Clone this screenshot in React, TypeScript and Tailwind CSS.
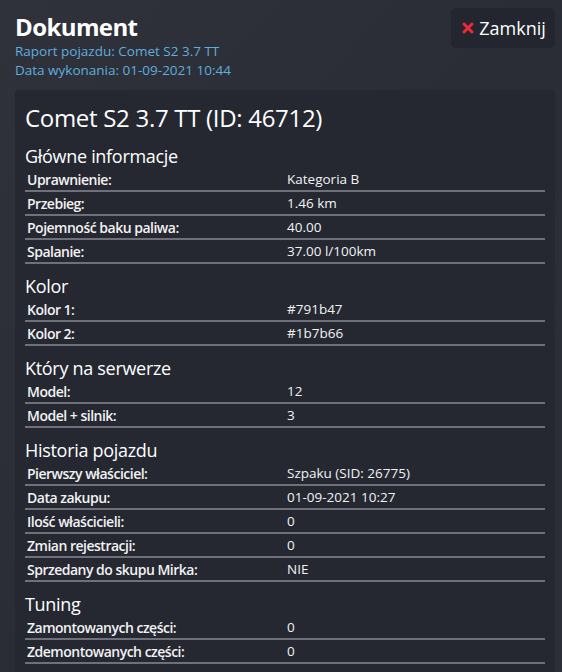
import { X } from 'lucide-react';

type Row = [string, string];

const sections: { title: string; rows: Row[] }[] = [
  {
    title: 'Główne informacje',
    rows: [
      ['Uprawnienie:', 'Kategoria B'],
      ['Przebieg:', '1.46 km'],
      ['Pojemność baku paliwa:', '40.00'],
      ['Spalanie:', '37.00 l/100km'],
    ],
  },
  {
    title: 'Kolor',
    rows: [
      ['Kolor 1:', '#791b47'],
      ['Kolor 2:', '#1b7b66'],
    ],
  },
  {
    title: 'Który na serwerze',
    rows: [
      ['Model:', '12'],
      ['Model + silnik:', '3'],
    ],
  },
  {
    title: 'Historia pojazdu',
    rows: [
      ['Pierwszy właściciel:', 'Szpaku (SID: 26775)'],
      ['Data zakupu:', '01-09-2021 10:27'],
      ['Ilość właścicieli:', '0'],
      ['Zmian rejestracji:', '0'],
      ['Sprzedany do skupu Mirka:', 'NIE'],
    ],
  },
  {
    title: 'Tuning',
    rows: [
      ['Zamontowanych części:', '0'],
      ['Zdemontowanych części:', '0'],
    ],
  },
];

export default function App() {
  return (
    <div className="w-[562px] h-[672px] overflow-hidden bg-[#2b2e37] bg-gradient-to-br from-[#2f323b] via-[#2a2d36] to-[#2c2f38] text-[#f2f2f2] font-['Open_Sans',sans-serif]">
      <div className="flex items-start justify-between pl-[15px] pr-[7px] pt-[8px]">
        <div className="pt-[4px]">
          <h1 className="text-[24px] font-bold leading-[30px] tracking-[-0.6px] text-white">Dokument</h1>
          <p className="text-[13.5px] leading-[19px] text-[#5eaede]">Raport pojazdu: Comet S2 3.7 TT</p>
          <p className="text-[13.5px] leading-[19px] text-[#5eaede]">Data wykonania: 01-09-2021 10:44</p>
        </div>
        <button className="flex h-[40px] w-[104px] items-center justify-center gap-[3px] rounded-[5px] bg-[#23262e] text-[18px] text-white">
          <X className="h-[16px] w-[16px] text-[#f0283a]" strokeWidth={4.5} />
          <span>Zamknij</span>
        </button>
      </div>

      <div className="ml-[15px] mr-[7px] mt-[10px] h-[600px] rounded-t-[3px] bg-[#252831] px-[10px] pt-[12px]">
        <h2 className="mb-[10px] text-[24px] leading-[32px] tracking-[-0.3px] text-white">Comet S2 3.7 TT (ID: 46712)</h2>
        {sections.map((s, i) => (
          <div key={s.title} className={i > 0 ? 'mt-[10px]' : ''}>
            <h3 className="text-[18px] leading-[24px] tracking-[-0.3px] text-white">{s.title}</h3>
            {s.rows.map(([label, value]) => (
              <div key={label} className="grid h-[24px] grid-cols-2 items-center border-b-2 border-[#6e7179] pt-[1px]">
                <span className="pl-[2px] text-[14px] font-semibold tracking-[-0.5px]">{label}</span>
                <span className="pl-[2px] text-[13.5px]">{value}</span>
              </div>
            ))}
          </div>
        ))}
      </div>
    </div>
  );
}
